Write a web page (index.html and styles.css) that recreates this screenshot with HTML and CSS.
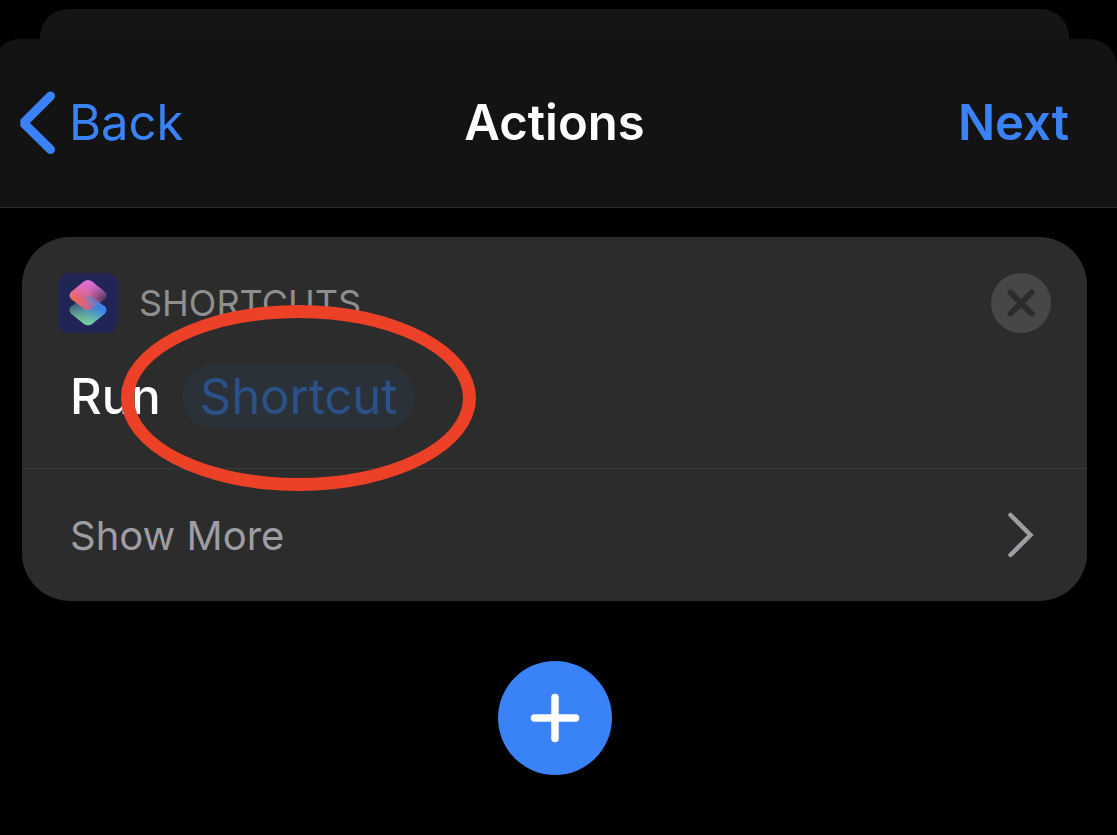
FILE: index.html
```html
<!DOCTYPE html>
<html lang="en">
<head>
    <meta charset="UTF-8">
    <meta name="viewport" content="width=device-width, initial-scale=1.0">
    <title>Actions</title>
    <link rel="stylesheet" href="styles.css">
</head>
<body>
    <div class="screen">
        <div class="sheet-behind"></div>
        <header class="navbar">
            <a class="back" href="#">
                <svg width="37" height="64" viewBox="0 0 37 64" fill="none" stroke="currentColor" stroke-width="9" stroke-linecap="round" stroke-linejoin="bevel" aria-hidden="true">
                    <path d="M32.500 5 L5.500 32 L32.500 58.500"/>
                </svg>
                Back
            </a>
            <h1>Actions</h1>
            <a class="next" href="#">Next</a>
        </header>
        <main>
            <section class="card">
                <div class="action">
                    <div class="action-header">
                        <svg class="app-icon" width="60" height="60" viewBox="0 0 60 60" aria-hidden="true">
                            <defs>
                                <linearGradient id="top" gradientUnits="userSpaceOnUse" x1="14" y1="26" x2="47" y2="24">
                                    <stop offset="0" stop-color="#ee6a50"/>
                                    <stop offset="0.5" stop-color="#d5618c"/>
                                    <stop offset="1" stop-color="#4c3562"/>
                                </linearGradient>
                                <linearGradient id="shine" gradientUnits="userSpaceOnUse" x1="30" y1="7" x2="30" y2="26">
                                    <stop offset="0" stop-color="#e070e0"/>
                                    <stop offset="1" stop-color="#e070e0" stop-opacity="0"/>
                                </linearGradient>
                                <linearGradient id="bottom" gradientUnits="userSpaceOnUse" x1="13" y1="36" x2="47" y2="36">
                                    <stop offset="0" stop-color="#37506f"/>
                                    <stop offset="0.5" stop-color="#4b88b8"/>
                                    <stop offset="1" stop-color="#3a80f6"/>
                                </linearGradient>
                                <linearGradient id="glow" gradientUnits="userSpaceOnUse" x1="27" y1="52" x2="31" y2="34">
                                    <stop offset="0" stop-color="#7cd89a"/>
                                    <stop offset="1" stop-color="#7cd89a" stop-opacity="0"/>
                                </linearGradient>
                                <linearGradient id="overlap" gradientUnits="userSpaceOnUse" x1="25" y1="33" x2="42" y2="27">
                                    <stop offset="0" stop-color="#d2646c" stop-opacity="0"/>
                                    <stop offset="0.45" stop-color="#9078b0"/>
                                    <stop offset="1" stop-color="#4a78dc"/>
                                </linearGradient>
                                <clipPath id="upper">
                                    <path d="M26 8.500 Q30 6 34 8.500 L47 19 Q50 22.500 47 26 L34 35.500 Q30 38 26 35.500 L13 26 Q10 22.500 13 19 Z"/>
                                </clipPath>
                            </defs>
                            <rect width="60" height="60" rx="12" fill="#202555"/>
                            <path d="M26 24 Q30 21.500 34 24 L47 33.500 Q50 37 47 40.500 L34 51 Q30 53.500 26 51 L13 40.500 Q10 37 13 33.500 Z" fill="url(#bottom)"/>
                            <path d="M26 24 Q30 21.500 34 24 L47 33.500 Q50 37 47 40.500 L34 51 Q30 53.500 26 51 L13 40.500 Q10 37 13 33.500 Z" fill="url(#glow)"/>
                            <path d="M26 8.500 Q30 6 34 8.500 L47 19 Q50 22.500 47 26 L34 35.500 Q30 38 26 35.500 L13 26 Q10 22.500 13 19 Z" fill="url(#top)"/>
                            <path d="M26 8.500 Q30 6 34 8.500 L47 19 Q50 22.500 47 26 L34 35.500 Q30 38 26 35.500 L13 26 Q10 22.500 13 19 Z" fill="url(#shine)"/>
                            <path clip-path="url(#upper)" d="M26 24 Q30 21.500 34 24 L47 33.500 L30 46 L13 33.500 Z" fill="url(#overlap)"/>
                        </svg>
                        <h2>SHORTCUTS</h2>
                        <button class="remove" type="button" aria-label="Remove action">
                            <svg width="60" height="60" viewBox="0 0 60 60" fill="none" stroke="#2c2c2c" stroke-width="6" stroke-linecap="round" aria-hidden="true">
                                <path d="M19.500 19.500 L40.500 40.500 M40.500 19.500 L19.500 40.500"/>
                            </svg>
                        </button>
                    </div>
                    <div class="action-body">
                        <span>Run</span>
                        <div class="param-wrap">
                            <button class="param" type="button">Shortcut</button>
                            <span class="ring"></span>
                        </div>
                    </div>
                </div>
                <button class="show-more" type="button">
                    Show More
                    <svg width="26" height="46" viewBox="0 0 26 46" fill="none" stroke="currentColor" stroke-width="4.500" stroke-linecap="round" aria-hidden="true">
                        <path d="M2.500 3 L22.500 23 L2.500 43"/>
                    </svg>
                </button>
            </section>
            <button class="add" type="button" aria-label="Add action">
                <svg width="50" height="50" viewBox="0 0 50 50" fill="none" stroke="#fff" stroke-width="7.500" stroke-linecap="round" aria-hidden="true">
                    <path d="M25 4.500 V45.500 M4.500 25 H45.500"/>
                </svg>
            </button>
        </main>
    </div>
</body>
</html>
```

FILE: styles.css
```css
* {
    box-sizing: border-box;
}

body {
    margin: 0;
    background-color: #000;
    color: #fff;
    font-family: Inter, "Liberation Sans", sans-serif;
    overflow-x: hidden;
}

button {
    font: inherit;
    border: none;
    padding: 0;
    background: none;
    cursor: pointer;
}

svg {
    display: block;
    flex: none;
}

.screen {
    margin-left: -8px;
    padding-top: 9px;
}

.sheet-behind {
    height: 30px;
    margin: 0 48px;
    border-radius: 28px 28px 0 0;
    background-color: #151515;
}

.navbar {
    display: grid;
    grid-template-columns: 1fr auto 1fr;
    align-items: center;
    height: 169px;
    padding: 0 48px 0 26px;
    margin-bottom: 29px;
    border-bottom: 1px solid #2c2c2c;
    border-radius: 28px 28px 0 0;
    background-color: #131313;
    font-size: 49px;
    line-height: 60px;
}

/* side paddings differ, so the title is pushed back to the middle */
.navbar h1 {
    margin: 0 0 0 22px;
    font-size: 49px;
    font-weight: 600;
}

.navbar a {
    color: #3a82f7;
    text-decoration: none;
}

.back {
    display: flex;
    align-items: center;
    gap: 14px;
}

.next {
    justify-self: end;
    font-weight: 600;
}

main {
    display: flex;
    flex-direction: column;
    align-items: center;
    gap: 60px;
    padding: 0 30px;
}

.card {
    width: 100%;
    border-radius: 48px;
    background-color: #2c2c2c;
}

.action {
    padding: 36px 36px 39px;
    border-bottom: 1px solid #3a3a3a;
}

.action-header {
    display: flex;
    align-items: center;
    gap: 21px;
    margin-bottom: 31px;
}

.action-header h2 {
    flex: 1;
    margin: 0;
    color: #8f8f8f;
    font-size: 36px;
    font-weight: 400;
    line-height: 44px;
}

.remove {
    border-radius: 50%;
    background-color: #474747;
}

.action-body {
    display: flex;
    align-items: center;
    gap: 21px;
    padding-left: 12px;
    font-size: 49px;
    font-weight: 500;
    line-height: 65px;
}

.param-wrap {
    position: relative;
}

.param {
    display: block;
    padding: 0 18px;
    border-radius: 33px;
    background-color: #2b3138;
    color: #2a5288;
    font-weight: 400;
}

/* red highlight around the parameter */
.ring {
    position: absolute;
    inset: -59px -61px -62px;
    border: 13px solid #ec4127;
    border-radius: 50%;
    pointer-events: none;
}

.show-more {
    display: flex;
    align-items: center;
    justify-content: space-between;
    width: 100%;
    height: 132px;
    padding: 0 53px 0 48px;
    color: #9d9da3;
    font-size: 40px;
}

.add {
    display: flex;
    align-items: center;
    justify-content: center;
    width: 114px;
    height: 114px;
    border-radius: 50%;
    background-color: #3a82f7;
}
```
